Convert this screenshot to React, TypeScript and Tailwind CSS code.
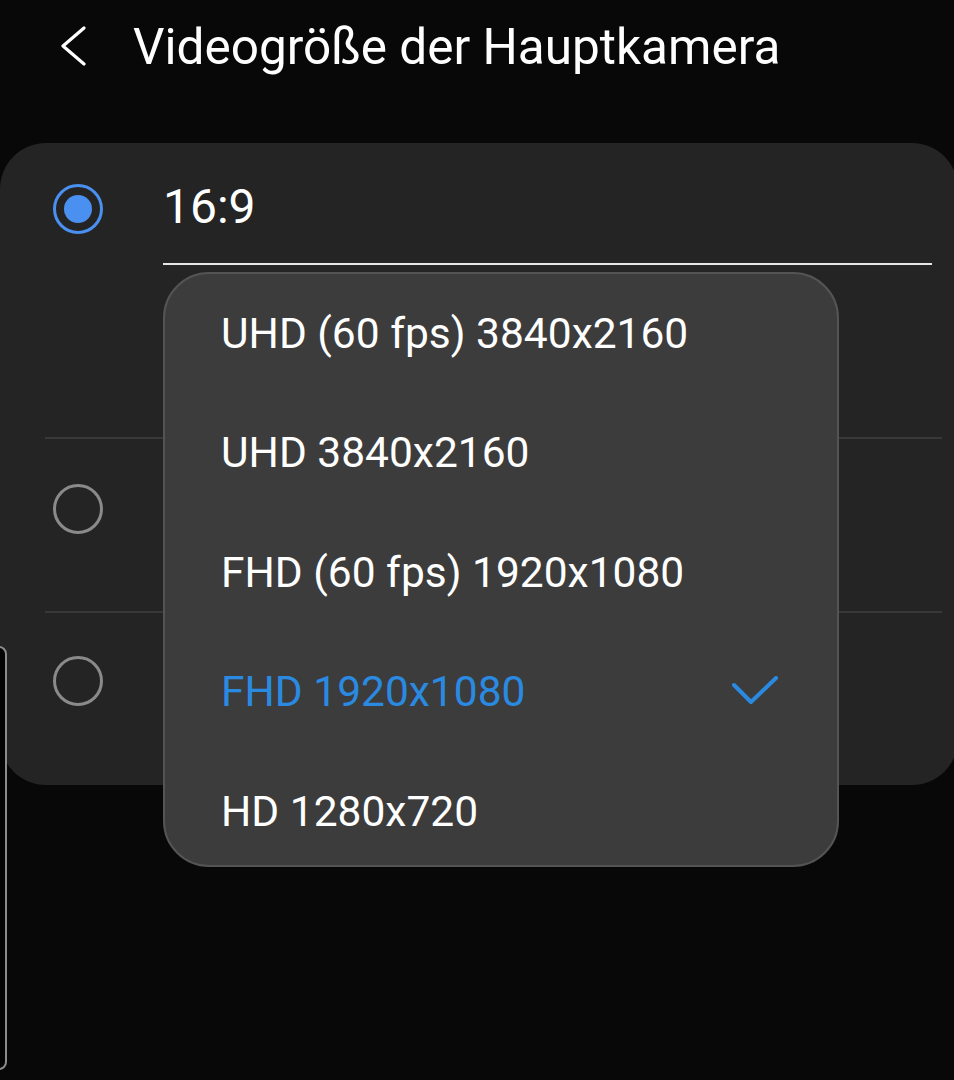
import React from "react";

const items = [
  "UHD (60 fps) 3840x2160",
  "UHD 3840x2160",
  "FHD (60 fps) 1920x1080",
  "FHD 1920x1080",
  "HD 1280x720",
];

function Radio({ selected }: { selected?: boolean }) {
  if (selected) {
    return (
      <div className="w-[50px] h-[50px] rounded-full border-[3px] border-[#4a90f0] flex items-center justify-center">
        <div className="w-[28px] h-[28px] rounded-full bg-[#4a90f0]" />
      </div>
    );
  }
  return <div className="w-[50px] h-[50px] rounded-full border-[3px] border-[#8a8a8a]" />;
}

export default function App() {
  return (
    <div
      className="relative w-[954px] h-[1080px] overflow-hidden bg-[#080808] text-white"
      style={{ fontFamily: "Roboto, 'Noto Sans', sans-serif" }}
    >
      {/* Header */}
      <div className="h-[143px] flex items-start pt-[17px]">
        <div className="w-[133px] pl-[58px] pt-[9px]">
          <svg width="32" height="42" viewBox="0 0 32 42">
            <polyline
              points="26,2 5,20 26,38"
              fill="none"
              stroke="#ffffff"
              strokeWidth="3.2"
              strokeLinecap="round"
              strokeLinejoin="round"
            />
          </svg>
        </div>
        <div className="text-[49.5px] leading-[60px]">Videogröße der Hauptkamera</div>
      </div>

      {/* Card */}
      <div className="w-[958px] bg-[#242424] rounded-[46px] flex flex-col">
        <div className="h-[294px] flex">
          <div className="w-[163px] pl-[53px] pt-[41px]">
            <Radio selected />
          </div>
          <div className="flex-1 pr-[26px] pt-[32px]">
            <div className="text-[48px] leading-[64px]">16:9</div>
            <div className="mt-[24px] h-[2px] bg-[#e6e6e6]" />
          </div>
        </div>
        <div className="ml-[45px] mr-[16px] h-[2px] bg-[#383838]" />
        <div className="h-[172px] flex items-start pt-[45px] pl-[53px]">
          <Radio />
        </div>
        <div className="ml-[45px] mr-[16px] h-[2px] bg-[#383838]" />
        <div className="h-[172px] flex items-start pt-[43px] pl-[53px]">
          <Radio />
        </div>
      </div>

      {/* Dropdown */}
      <div className="absolute left-[163px] top-[272px] w-[676px] h-[595px] rounded-[46px] bg-[#3c3c3c] border-2 border-[#545454] flex flex-col">
        {items.map((t, i) => {
          const active = i === 3;
          return (
            <div key={t} className="h-[119.5px] shrink-0 flex items-center justify-between pl-[56px] pr-[58px]">
              <span className={`text-[42.5px] leading-[50px] ${active ? "text-[#2a8ae2]" : "text-white"}`}>{t}</span>
              {active && (
                <svg width="48" height="32" viewBox="0 0 48 32">
                  <polyline
                    points="3,9 20,26 45,2"
                    fill="none"
                    stroke="#2a8ae2"
                    strokeWidth="4"
                    strokeLinecap="round"
                    strokeLinejoin="round"
                  />
                </svg>
              )}
            </div>
          );
        })}
      </div>

      {/* Edge handle */}
      <div className="absolute left-[-20px] top-[646px] w-[27px] h-[424px] rounded-[8px] border-2 border-[#8c8c8c] bg-[#050505]" />
    </div>
  );
}
